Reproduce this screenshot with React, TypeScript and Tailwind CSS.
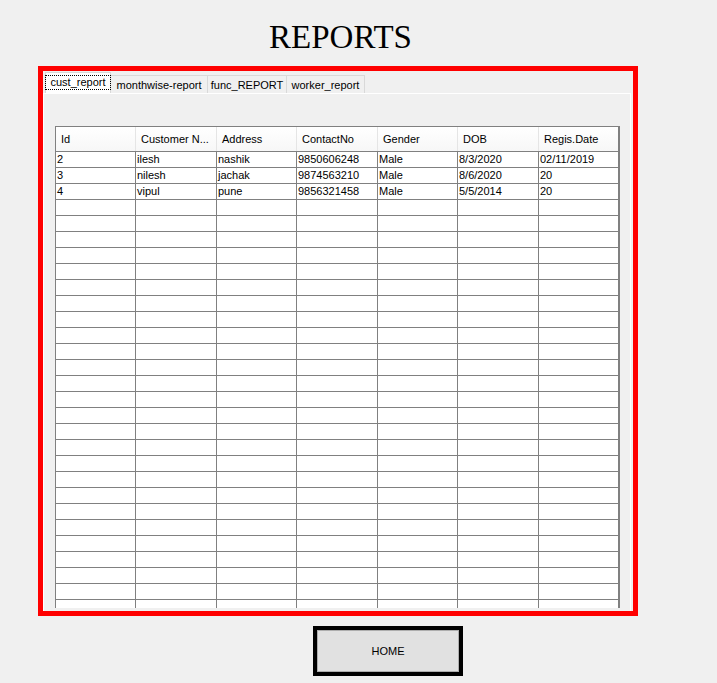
import React from "react";

const headers = ["Id", "Customer N...", "Address", "ContactNo", "Gender", "DOB", "Regis.Date"];
const data: string[][] = [
  ["2", "ilesh", "nashik", "9850606248", "Male", "8/3/2020", "02/11/2019"],
  ["3", "nilesh", "jachak", "9874563210", "Male", "8/6/2020", "20"],
  ["4", "vipul", "pune", "9856321458", "Male", "5/5/2014", "20"],
];
const rows: string[][] = [...data];
while (rows.length < 30) rows.push(["", "", "", "", "", "", ""]);

const tabs = [
  { label: "cust_report", w: "w-[66px]" },
  { label: "monthwise-report", w: "w-[97px]" },
  { label: "func_REPORT", w: "w-[79px]" },
  { label: "worker_report", w: "w-[78px]" },
];

const cols = "grid grid-cols-[80px_81px_80px_81px_80px_81px_80px]";

export default function App() {
  return (
    <div
      className="w-full h-[683px] bg-[#f0f0f0] overflow-hidden text-black"
      style={{ fontFamily: '"Liberation Sans", Arial, sans-serif' }}
    >
      <div className="h-[66px] pt-[17px]">
        <div
          className="w-[681px] text-center text-[33px] leading-[40px] text-black"
          style={{ fontFamily: '"Liberation Serif", "Times New Roman", serif' }}
        >
          REPORTS
        </div>
      </div>

      <div className="ml-[38px] w-[600px] h-[550px] border-[5px] border-[#ff0000] bg-[#f0f0f0] flex flex-col">
        <div className="flex items-end h-[22px] pl-[2px] text-[11px]">
          {tabs.map((t, i) =>
            i === 0 ? (
              <div
                key={t.label}
                className={`${t.w} h-[21px] bg-white border border-b-0 border-[#d9d9d9] flex items-start justify-center pt-[2px]`}
              >
                <span className="border border-dotted border-black px-[4px] leading-[13px]">{t.label}</span>
              </div>
            ) : (
              <div
                key={t.label}
                className={`${t.w} h-[18px] bg-[#f0f0f0] border border-l-0 border-b-0 border-[#d9d9d9] flex items-center justify-center leading-[14px]`}
              >
                {t.label}
              </div>
            )
          )}
        </div>
        <div className="flex-1 mr-[2px] border-t border-l border-r border-white pt-[32px] pl-[11px] overflow-hidden">
          <div className="w-[565px] h-[482px] overflow-hidden border-l border-t border-r border-[#808080] bg-white text-[11px]">
            <div className={`${cols} h-[25px] border-b border-[#808080] bg-gradient-to-b from-white to-[#f7f7f7]`}>
              {headers.map((h, i) => (
                <div
                  key={h}
                  className={`pl-[5px] pt-[1px] flex items-center whitespace-nowrap overflow-hidden ${
                    i < 6 ? "border-r border-[#e5e5e5]" : "border-r border-[#808080]"
                  }`}
                >
                  {h}
                </div>
              ))}
            </div>
            {rows.map((r, ri) => (
              <div key={ri} className={`${cols} h-[16px] border-b border-[#808080]`}>
                {r.map((c, ci) => (
                  <div
                    key={ci}
                    className="pl-[1px] leading-[15px] border-r border-[#808080] whitespace-nowrap overflow-hidden"
                  >
                    {c}
                  </div>
                ))}
              </div>
            ))}
          </div>
        </div>
      </div>

      <div className="mt-[10px] ml-[313px] w-[150px] h-[50px] border-4 border-black">
        <div className="w-full h-full border border-[#adadad] bg-[#e1e1e1] flex items-center justify-center text-[11px]">
          HOME
        </div>
      </div>
    </div>
  );
}
